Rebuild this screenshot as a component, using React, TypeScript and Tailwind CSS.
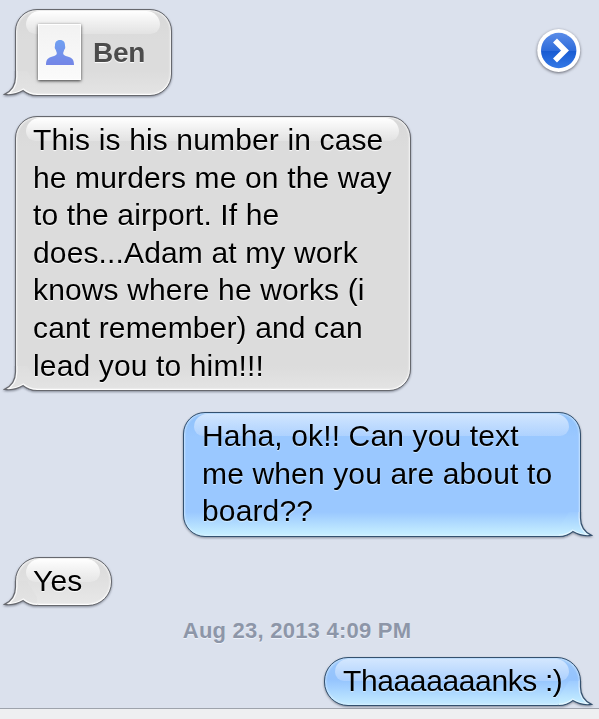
import type { ReactNode } from "react";
import clsx from "clsx";

type Side = "in" | "out";

interface Message {
  side: Side;
  lines: string[];
  size: string;
}

const messages: Record<"long" | "reply" | "yes" | "thanks", Message> = {
  long: {
    side: "in",
    lines: [
      "This is his number in case",
      "he murders me on the way",
      "to the airport. If he",
      "does...Adam at my work",
      "knows where he works (i",
      "cant remember) and can",
      "lead you to him!!!",
    ],
    size: "h-[275px] w-[396px]",
  },
  reply: {
    side: "out",
    lines: ["Haha, ok!! Can you text", "me when you are about to", "board??"],
    size: "h-[125px] w-[398px]",
  },
  yes: { side: "in", lines: ["Yes"], size: "h-[49px] w-[97px]" },
  thanks: { side: "out", lines: ["Thaaaaaaanks :)"], size: "h-[49px] w-[257px]" },
};

const TAIL_EDGE = "M12.5 0V6C12.5 14 8.5 20 1.5 23.4C8 24.4 14.5 23 20.2 19.6C24 22.8 28 24.5 34 24.5";

function Tail({ side }: { side: Side }) {
  const out = side === "out";
  return (
    <svg
      viewBox="0 0 34 26"
      className={clsx("absolute -bottom-px h-[26px] w-[34px]", out ? "-right-3 -scale-x-100" : "-left-3")}
    >
      <defs>
        <linearGradient id={`tail-${side}`} x1="0" y1="0" x2="0" y2="1">
          <stop offset="0" stopColor={out ? "#9dcbff" : "#dedede"} />
          <stop offset="1" stopColor={out ? "#c9f1ff" : "#e4e4e4"} />
        </linearGradient>
        <clipPath id={`clip-${side}`}>
          <path d={`${TAIL_EDGE}V0Z`} />
        </clipPath>
      </defs>
      <path d={`${TAIL_EDGE}V16L24 0Z`} fill={`url(#tail-${side})`} />
      <path
        d={TAIL_EDGE}
        fill="none"
        stroke="#fff"
        strokeOpacity={out ? 0.5 : 0.8}
        strokeWidth="4"
        clipPath={`url(#clip-${side})`}
      />
      <path d={TAIL_EDGE} fill="none" stroke={out ? "#34516f" : "#66686e"} strokeWidth="1.2" />
    </svg>
  );
}

function Bubble({ side, size, short, children }: { side: Side; size: string; short?: boolean; children: ReactNode }) {
  const out = side === "out";
  return (
    <div
      className={clsx(
        "relative shrink-0 drop-shadow-[0_1px_1px_rgba(60,65,80,0.55)]",
        size,
        out ? "mr-[18px] self-end" : "ml-[15px]",
      )}
    >
      <div
        className={clsx(
          "absolute inset-0 border",
          short ? "rounded-[24px]" : "rounded-[22px]",
          out
            ? "border-[#34516f] shadow-[inset_0_0_2px_1px_rgba(225,243,255,0.65)]"
            : "border-[#66686e] shadow-[inset_0_-1px_1px_#fff,inset_0_0_2px_1px_rgba(255,255,255,0.7)]",
          out && !short && "bg-[linear-gradient(to_bottom,#8fc1fb,#9ac8ff_24px,#9ac8ff_calc(100%-24px),#c9f1ff)]",
          out && short && "bg-[linear-gradient(to_bottom,#9cc8fb,#94c3fd_45%,#a5d2ff_65%,#c5ecff)]",
          !out && !short && "bg-[linear-gradient(to_bottom,#d8d8d8,#dcdcdc_30px,#dcdcdc_calc(100%-24px),#e4e4e4)]",
          !out && short && "bg-[linear-gradient(to_bottom,#dadada,#e0e0e0_50%,#e8e8e8)]",
        )}
      />
      <Tail side={side} />
      <div
        className={clsx(
          "absolute top-[2px] right-[12px] left-[11px] rounded-t-[16px] rounded-b-[11px]",
          out
            ? "h-[22px] bg-linear-to-b from-[#d9eaff]/90 to-[#bcd9ff]/60"
            : "h-[23px] bg-linear-to-b from-white to-white/20",
        )}
      />
      <div className="relative h-full">{children}</div>
    </div>
  );
}

function TextBubble({ message, short }: { message: Message; short?: boolean }) {
  const out = message.side === "out";
  return (
    <Bubble side={message.side} size={message.size} short={short}>
      <p
        className={clsx(
          "pt-[5px] text-[30px] leading-[37.6px] whitespace-nowrap text-black",
          out && short ? "tracking-[-0.38px]" : "tracking-[0.14px]",
          out
            ? "pl-[19px] [text-shadow:0_1px_1px_rgba(220,240,255,0.8)]"
            : "pl-[18px] [text-shadow:0_1px_1px_rgba(255,255,255,0.9)]",
        )}
      >
        {message.lines.map((line) => (
          <span key={line} className="block">
            {line}
          </span>
        ))}
      </p>
    </Bubble>
  );
}

function ContactCard() {
  return (
    <Bubble side="in" size="h-[87px] w-[157px]">
      <div className="flex items-start pt-[15px] pl-[23px]">
        <div className="flex h-[56px] w-[43px] items-center justify-center border border-white bg-linear-to-b from-[#f2f2f2] to-[#fbfbfb] shadow-[0_1px_3px_rgba(0,0,0,0.75)]">
          <svg viewBox="0 0 28 25" className="h-[25px] w-[28px]">
            <defs>
              <linearGradient id="person" x1="0" y1="0" x2="0" y2="1">
                <stop offset="0" stopColor="#6fa0f2" />
                <stop offset="1" stopColor="#7485e6" />
              </linearGradient>
            </defs>
            <path
              d="M14 0C17.6 0 19 2.4 19 5.2C19 6.4 19.4 6.7 19.2 8C19 9.2 18.3 9.4 18 10.5C17.6 12 17.2 12.2 17.2 13.5C17.2 15.2 19 15.7 21.5 16.5C25.8 18 28 18.8 28 25H0C0 18.8 2.2 18 6.5 16.5C9 15.7 10.8 15.2 10.8 13.5C10.8 12.2 10.4 12 10 10.5C9.7 9.4 9 9.2 8.8 8C8.6 6.7 9 6.4 9 5.2C9 2.4 10.4 0 14 0Z"
              fill="url(#person)"
            />
          </svg>
        </div>
        <span className="mt-[10px] ml-[12px] text-[28px] leading-[38px] font-bold tracking-[-0.3px] text-[#4c4c4c] [text-shadow:0_1px_1px_#fff]">
          Ben
        </span>
      </div>
    </Bubble>
  );
}

function DisclosureButton() {
  return (
    <button type="button" aria-label="Contact details" className="mt-[19px] mr-[18px] size-[44px]">
      <svg viewBox="0 0 44 44" className="size-[44px] overflow-visible drop-shadow-[0_1px_1.5px_rgba(50,50,60,0.7)]">
        <defs>
          <linearGradient id="disc" x1="0" y1="0" x2="0" y2="1">
            <stop offset="0" stopColor="#5a8ce8" />
            <stop offset="0.5" stopColor="#2f6cdb" />
            <stop offset="0.52" stopColor="#185bd2" />
            <stop offset="1" stopColor="#3579e6" />
          </linearGradient>
        </defs>
        <circle cx="21.7" cy="22.5" r="21.5" fill="#fff" />
        <circle cx="21.7" cy="22.5" r="17.7" fill="url(#disc)" />
        <path d="M18 12.6L28 22.6L18 32.6" fill="none" stroke="#fff" strokeWidth="5.6" />
      </svg>
    </button>
  );
}

export default function App() {
  return (
    <main className="flex h-[719px] w-[599px] flex-col overflow-hidden bg-[#dbe1ed] font-['Liberation_Sans',Arial,sans-serif]">
      <div className="flex h-[107px] items-start justify-between pt-[9px]">
        <ContactCard />
        <DisclosureButton />
      </div>
      <div className="flex flex-col pt-[9px]">
        <TextBubble message={messages.long} />
        <div className="mt-[21px] mb-[20px] flex flex-col">
          <TextBubble message={messages.reply} />
        </div>
        <TextBubble message={messages.yes} short />
      </div>
      <time className="mt-[12px] pr-[5px] text-center text-[22px] leading-[26px] font-bold tracking-[0.23px] text-[#8d96a8] [text-shadow:0_1px_0_#eef2fa]">
        Aug 23, 2013 4:09 PM
      </time>
      <div className="mt-[13px] flex flex-col">
        <TextBubble message={messages.thanks} short />
      </div>
      <footer className="mt-auto h-[11px] shrink-0 border-t border-[#9ea3ac] bg-[#eeeff1]" />
    </main>
  );
}
